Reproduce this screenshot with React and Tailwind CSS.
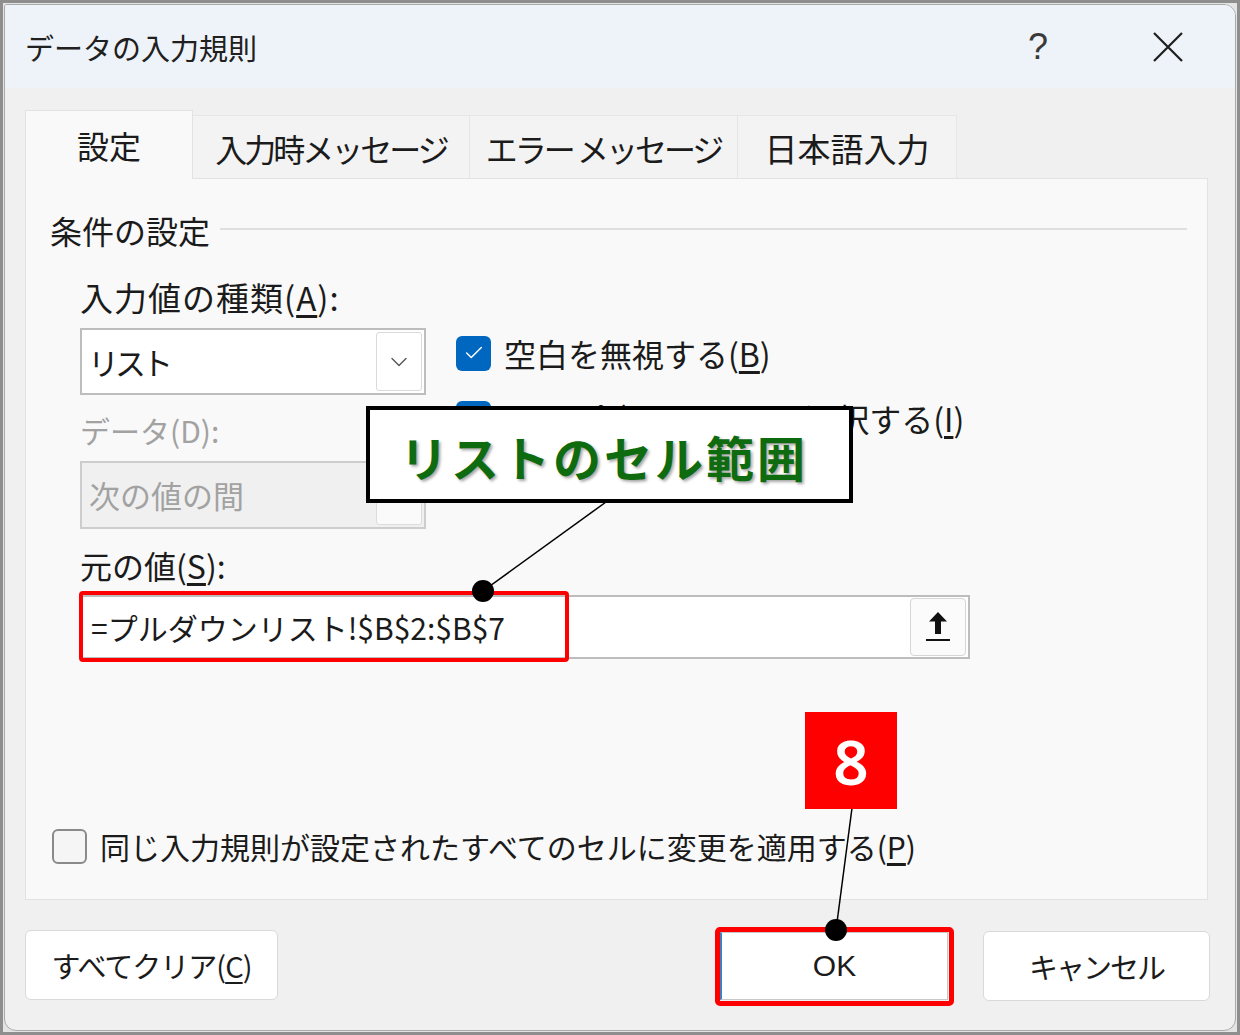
import { Check, ChevronDown } from "lucide-react";

const jp = "font-['Noto_Sans_CJK_JP','Noto_Sans',sans-serif]";

export default function App() {
  return (
    <div className={`relative h-[1035px] w-[1240px] overflow-hidden ${jp} text-[#1b1b1b]`}>
      <div className="h-full w-full border-[3px] border-[#8e8e8e] bg-[#e4e4e4] p-px">
        <div className="flex h-full flex-col overflow-hidden rounded-[12px] rounded-tl-[3px] border border-[#a9a9a9] bg-[#f0f0f0]">
          <TitleBar />
          <div className="flex flex-1 flex-col pl-[20px] pr-[27px] pt-[22px]">
            <Tabs />
            <Panel />
            <Buttons />
          </div>
        </div>
      </div>
      <Annotations />
    </div>
  );
}

function TitleBar() {
  return (
    <div className="flex h-[83px] shrink-0 items-center bg-[#eef3f9] pl-[20px] pr-[37px]">
      <p className="text-[29px] leading-[40px] text-[#202020]">データの入力規則</p>
      <div className="ml-auto flex items-center gap-[70px]">
        <div className="flex w-[60px] justify-center font-['Liberation_Sans',sans-serif] text-[36px] leading-[40px] text-[#3a3a3a]">
          ?
        </div>
        <div className="flex w-[60px] justify-center">
          <svg width="32" height="32" viewBox="0 0 32 32">
            <path d="M2 2 L30 30 M30 2 L2 30" stroke="#1e1e1e" strokeWidth="2.2" fill="none" />
          </svg>
        </div>
      </div>
    </div>
  );
}

function Tabs() {
  return (
    <div className="flex h-[68px] items-end">
      <div className="relative z-10 -mb-px flex h-[69px] w-[168px] items-center justify-center border border-b-0 border-[#e2e2e2] bg-[#f9f9f9] text-[32px] leading-[40px]">
        設定
      </div>
      <Tab label="入力時メッセージ" width="w-[277px]" track="tracking-[-3px]" />
      <Tab label="エラー メッセージ" width="w-[268px]" track="tracking-[-3px]" />
      <Tab label="日本語入力" width="w-[219px]" track="tracking-[0px] text-[33px]" />
    </div>
  );
}

function Tab({ label, width, track }) {
  return (
    <div
      className={`flex h-[63px] ${width} items-center justify-center whitespace-pre border border-l-0 border-b-0 border-[#e6e6e6] bg-[#f3f3f3] pt-[2px] text-[32px] leading-[40px] ${track}`}
    >
      {label}
    </div>
  );
}

function Panel() {
  return (
    <div className="flex h-[722px] shrink-0 flex-col border border-[#e2e2e2] bg-[#f9f9f9] pl-[24px] pr-[20px]">
      <div className="mt-[31px] flex h-[40px] items-center gap-[10px]">
        <p className="text-[32px] leading-[40px]">条件の設定</p>
        <div className="mt-[-2px] h-[2px] flex-1 bg-[#dfdfdf]" />
      </div>

      <div className="pl-[30px]">
        <Label className="mt-[27px] text-[33px] tracking-[1px]">
          入力値の種類(<u className="underline-offset-4">A</u>):
        </Label>

        <div className="mt-[11px] flex">
          <div className="w-[346px]">
            <div className="flex h-[67px] items-center border-2 border-[#bdbdbd] bg-white pl-[6px] pr-[2px]">
              <span className="text-[31px] leading-[40px] tracking-[-4px]">リスト</span>
              <div className="ml-auto flex h-[59px] w-[46px] items-center justify-center rounded-[3px] border border-[#dadada] bg-white">
                <ChevronDown size={28} strokeWidth={1.2} color="#555" />
              </div>
            </div>

            <Label className="mt-[15px] text-[30px] text-[#a2a2a2]">データ(D):</Label>

            <div className="mt-[11px] flex h-[68px] items-center border-2 border-[#cdcdcd] bg-[#f0f0f0] pl-[7px] pr-[2px]">
              <span className="text-[31px] leading-[40px] text-[#a2a2a2]">次の値の間</span>
              <div className="ml-auto h-[60px] w-[46px] rounded-[3px] border border-[#dcdcdc] bg-[#fafafa]" />
            </div>
          </div>

          <div className="ml-[30px] flex flex-col gap-[25px] pt-[5px]">
            <CheckRow checked>
              空白を無視する(<u className="underline-offset-4">B</u>)
            </CheckRow>
            <CheckRow checked>
              <span className="tracking-[-9px]">ドロップダウン リスト</span>
              <span className="ml-[9px]">から選択する(<u className="underline-offset-4">I</u>)</span>
            </CheckRow>
          </div>
        </div>

        <Label className="mt-[16px] text-[32px]">
          元の値(<u className="underline-offset-4">S</u>):
        </Label>

        <div className="mt-[10px] flex h-[64px] w-[890px] items-center border-2 border-[#bdbdbd] bg-white pl-[9px] pr-[2px]">
          <span className="text-[30px] leading-[40px]">=プルダウンリスト!$B$2:$B$7</span>
          <div className="ml-auto flex h-[58px] w-[56px] items-center justify-center rounded-[4px] border border-[#d6d6d6] bg-[#fbfbfb]">
            <svg width="28" height="34" viewBox="0 0 28 34">
              <path d="M14 2 L23 11.5 L17 11.5 L17 24 L11 24 L11 11.5 L5 11.5 Z" fill="#111" />
              <rect x="2" y="29" width="24" height="2" fill="#111" />
            </svg>
          </div>
        </div>
      </div>

      <div className="mt-auto mb-[33px] ml-[2px] flex h-[40px] items-center">
        <div className="h-[35px] w-[35px] rounded-[6px] border-2 border-[#8a8a8a] bg-[#f5f5f5]" />
        <p className="ml-[13px] text-[30px] leading-[40px]">
          同じ入力規則が設定されたすべてのセルに変更を適用する(<u className="underline-offset-4">P</u>)
        </p>
      </div>
    </div>
  );
}

function Label({ className = "", children }) {
  return <p className={`h-[40px] leading-[40px] ${className}`}>{children}</p>;
}

function CheckRow({ checked, children }) {
  return (
    <div className="flex h-[40px] items-center">
      <div
        className={`flex h-[35px] w-[35px] shrink-0 items-center justify-center rounded-[6px] ${
          checked ? "bg-[#0067c0]" : "border-2 border-[#8a8a8a] bg-[#f5f5f5]"
        }`}
      >
        {checked && <Check size={22} strokeWidth={1.6} color="#fff" />}
      </div>
      <p className="ml-[13px] whitespace-nowrap text-[32px] leading-[40px]">{children}</p>
    </div>
  );
}

function Buttons() {
  return (
    <div className="mt-[30px] flex items-start">
      <button className="flex h-[70px] w-[253px] items-center justify-center rounded-[6px] border border-[#d9d9d9] bg-white text-[29px] leading-[40px] tracking-[-1px]">
        すべてクリア(<u className="underline-offset-4">C</u>)
      </button>
      <div className="-mr-[2px] ml-auto flex items-start gap-[35px]">
        <button className="mt-[2px] flex h-[68px] w-[228px] items-center justify-center border border-l-2 border-[#c8c8c8] border-l-[#3b82c4] bg-white font-['Liberation_Sans',sans-serif] text-[30px] leading-[40px]">
          OK
        </button>
        <button className="mt-px flex h-[70px] w-[227px] items-center justify-center rounded-[6px] border border-[#d9d9d9] bg-white text-[29px] leading-[40px] tracking-[-2px]">
          キャンセル
        </button>
      </div>
    </div>
  );
}

function Annotations() {
  return (
    <>
      <div className="absolute left-[79px] top-[591px] h-[71px] w-[490px] rounded-[4px] border-4 border-[#ff0000]" />
      <div className="absolute left-[715px] top-[927px] h-[79px] w-[239px] rounded-[5px] border-[5px] border-[#ff0000]" />

      <svg className="absolute left-0 top-0" width="1240" height="1035" viewBox="0 0 1240 1035">
        <line x1="606" y1="502" x2="483" y2="591" stroke="#000" strokeWidth="1.5" />
        <circle cx="483" cy="591" r="11" fill="#000" />
        <line x1="852" y1="808" x2="836" y2="930" stroke="#000" strokeWidth="1.5" />
        <circle cx="836" cy="930" r="11" fill="#000" />
      </svg>

      <div className="absolute left-[366px] top-[406px] flex h-[97px] w-[487px] items-center border-4 border-black bg-white pl-[30px] pt-[2px]">
        <span className="text-[48px] font-bold leading-[56px] tracking-[3px] text-[#0f6b0f] [text-shadow:2px_2px_3px_rgba(0,0,0,0.35)]">
          リストのセル範囲
        </span>
      </div>

      <div className="absolute left-[805px] top-[712px] flex h-[97px] w-[92px] items-center justify-center bg-[#ff0000]">
        <span className="font-['Noto_Sans',sans-serif] text-[62px] font-semibold leading-none text-white">8</span>
      </div>
    </>
  );
}
